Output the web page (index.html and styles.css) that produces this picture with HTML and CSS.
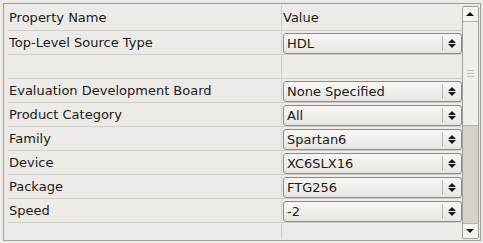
FILE: index.html
```html
<!DOCTYPE html>
<html lang="en">
<head>
	<meta charset="UTF-8">
	<title>Project Properties</title>
	<link rel="stylesheet" href="styles.css">
</head>
<body>
	<main class="frame">
		<div class="grid">
			<div class="row head">
				<div class="name">Property Name</div>
				<div class="value">Value</div>
			</div>
			<div class="row">
				<div class="name">Top-Level Source Type</div>
				<div class="value"><span class="combo">HDL<i class="spin"></i></span></div>
			</div>
			<div class="row">
				<div class="name"></div>
				<div class="value blank"></div>
			</div>
			<div class="row">
				<div class="name">Evaluation Development Board</div>
				<div class="value"><span class="combo">None Specified<i class="spin"></i></span></div>
			</div>
			<div class="row">
				<div class="name">Product Category</div>
				<div class="value"><span class="combo">All<i class="spin"></i></span></div>
			</div>
			<div class="row">
				<div class="name">Family</div>
				<div class="value"><span class="combo">Spartan6<i class="spin"></i></span></div>
			</div>
			<div class="row">
				<div class="name">Device</div>
				<div class="value"><span class="combo">XC6SLX16<i class="spin"></i></span></div>
			</div>
			<div class="row">
				<div class="name">Package</div>
				<div class="value"><span class="combo">FTG256<i class="spin"></i></span></div>
			</div>
			<div class="row">
				<div class="name">Speed</div>
				<div class="value"><span class="combo">-2<i class="spin"></i></span></div>
			</div>
			<div class="row last">
				<div class="name"></div>
				<div class="value blank"></div>
			</div>
		</div>
		<div class="scroll">
			<b class="btn up"></b>
			<b class="thumb"><i class="grip"></i></b>
			<b class="trough"></b>
			<b class="btn down"></b>
		</div>
	</main>
</body>
</html>
```

FILE: styles.css
```css
html,body{
	margin: 0;
	width: 100%;
	height: 100%;
	overflow: hidden;
	background-color: #edebe7;
}
body{
	padding: 3px 2px 2px 3px;
	box-sizing: border-box;
	font-family: "DejaVu Sans", sans-serif;
	font-size: 13px;
	color: #1a1a1a;
}
.frame{
	display: flex;
	height: 100%;
	box-sizing: border-box;
	border: 1px solid #a19e99;
	padding: 1px 1px 1px 0;
}
.grid{
	flex: 1;
	display: flex;
	flex-direction: column;
}
.row{
	display: grid;
	grid-template-columns: 277px 1fr;
	height: 24px;
}
.row.head{
	height: 26px;
}
.row.last{
	flex: 1;
}
.name{
	margin-left: 4px;
	padding-left: 1px;
	line-height: 23px;
	border-bottom: 1px solid #d3d0ca;
}
.head .name,.head .value{
	line-height: 25px;
}
.last .name,.last .value{
	border-bottom: none;
}
.value{
	border-left: 1px solid #d3d0ca;
	border-bottom: 1px solid #d3d0ca;
	padding-left: 1px;
}
.head .value{
	padding-left: 1px;
}
.combo{
	display: flex;
	align-items: center;
	position: relative;
	margin-top: 2px;
	height: 21px;
	box-sizing: border-box;
	padding-left: 3px;
	border: 1px solid #8d8a85;
	border-radius: 3px;
	background: linear-gradient(#f7f6f4,#e9e7e3);
	line-height: 19px;
}
.spin{
	position: absolute;
	right: 0;
	top: 2px;
	bottom: 2px;
	width: 18px;
	border-left: 1px solid #b5b2ad;
}
.spin::before,.spin::after{
	content: '';
	position: absolute;
	left: 5px;
	border-left: 4px solid transparent;
	border-right: 4px solid transparent;
}
.spin::before{
	top: 3px;
	border-bottom: 4px solid #1a1a1a;
}
.spin::after{
	bottom: 3px;
	border-top: 4px solid #1a1a1a;
}
.scroll{
	display: flex;
	flex-direction: column;
	width: 15px;
	margin-top: 1px;
	border: 1px solid #a19e99;
	border-radius: 2px;
	background-color: #d6d2cb;
}
.btn{
	display: block;
	position: relative;
	height: 14px;
	background-color: #f3f2ef;
	border-bottom: 1px solid #b9b5ae;
}
.down{
	margin-top: auto;
	border-bottom: none;
	border-top: 1px solid #b9b5ae;
}
.btn::after{
	content: '';
	position: absolute;
	left: 3px;
	top: 5px;
	border-left: 4px solid transparent;
	border-right: 4px solid transparent;
}
.up::after{
	border-bottom: 4px solid #111;
}
.down::after{
	border-top: 4px solid #111;
}
.thumb{
	display: flex;
	align-items: center;
	justify-content: center;
	height: 103px;
	background-color: #f1efec;
	border-bottom: 1px solid #b9b5ae;
}
.grip{
	width: 7px;
	height: 5px;
	border-top: 1px solid #c5c1bb;
	border-bottom: 1px solid #c5c1bb;
	background: linear-gradient(#c5c1bb,#c5c1bb) center/100% 1px no-repeat;
}
```
